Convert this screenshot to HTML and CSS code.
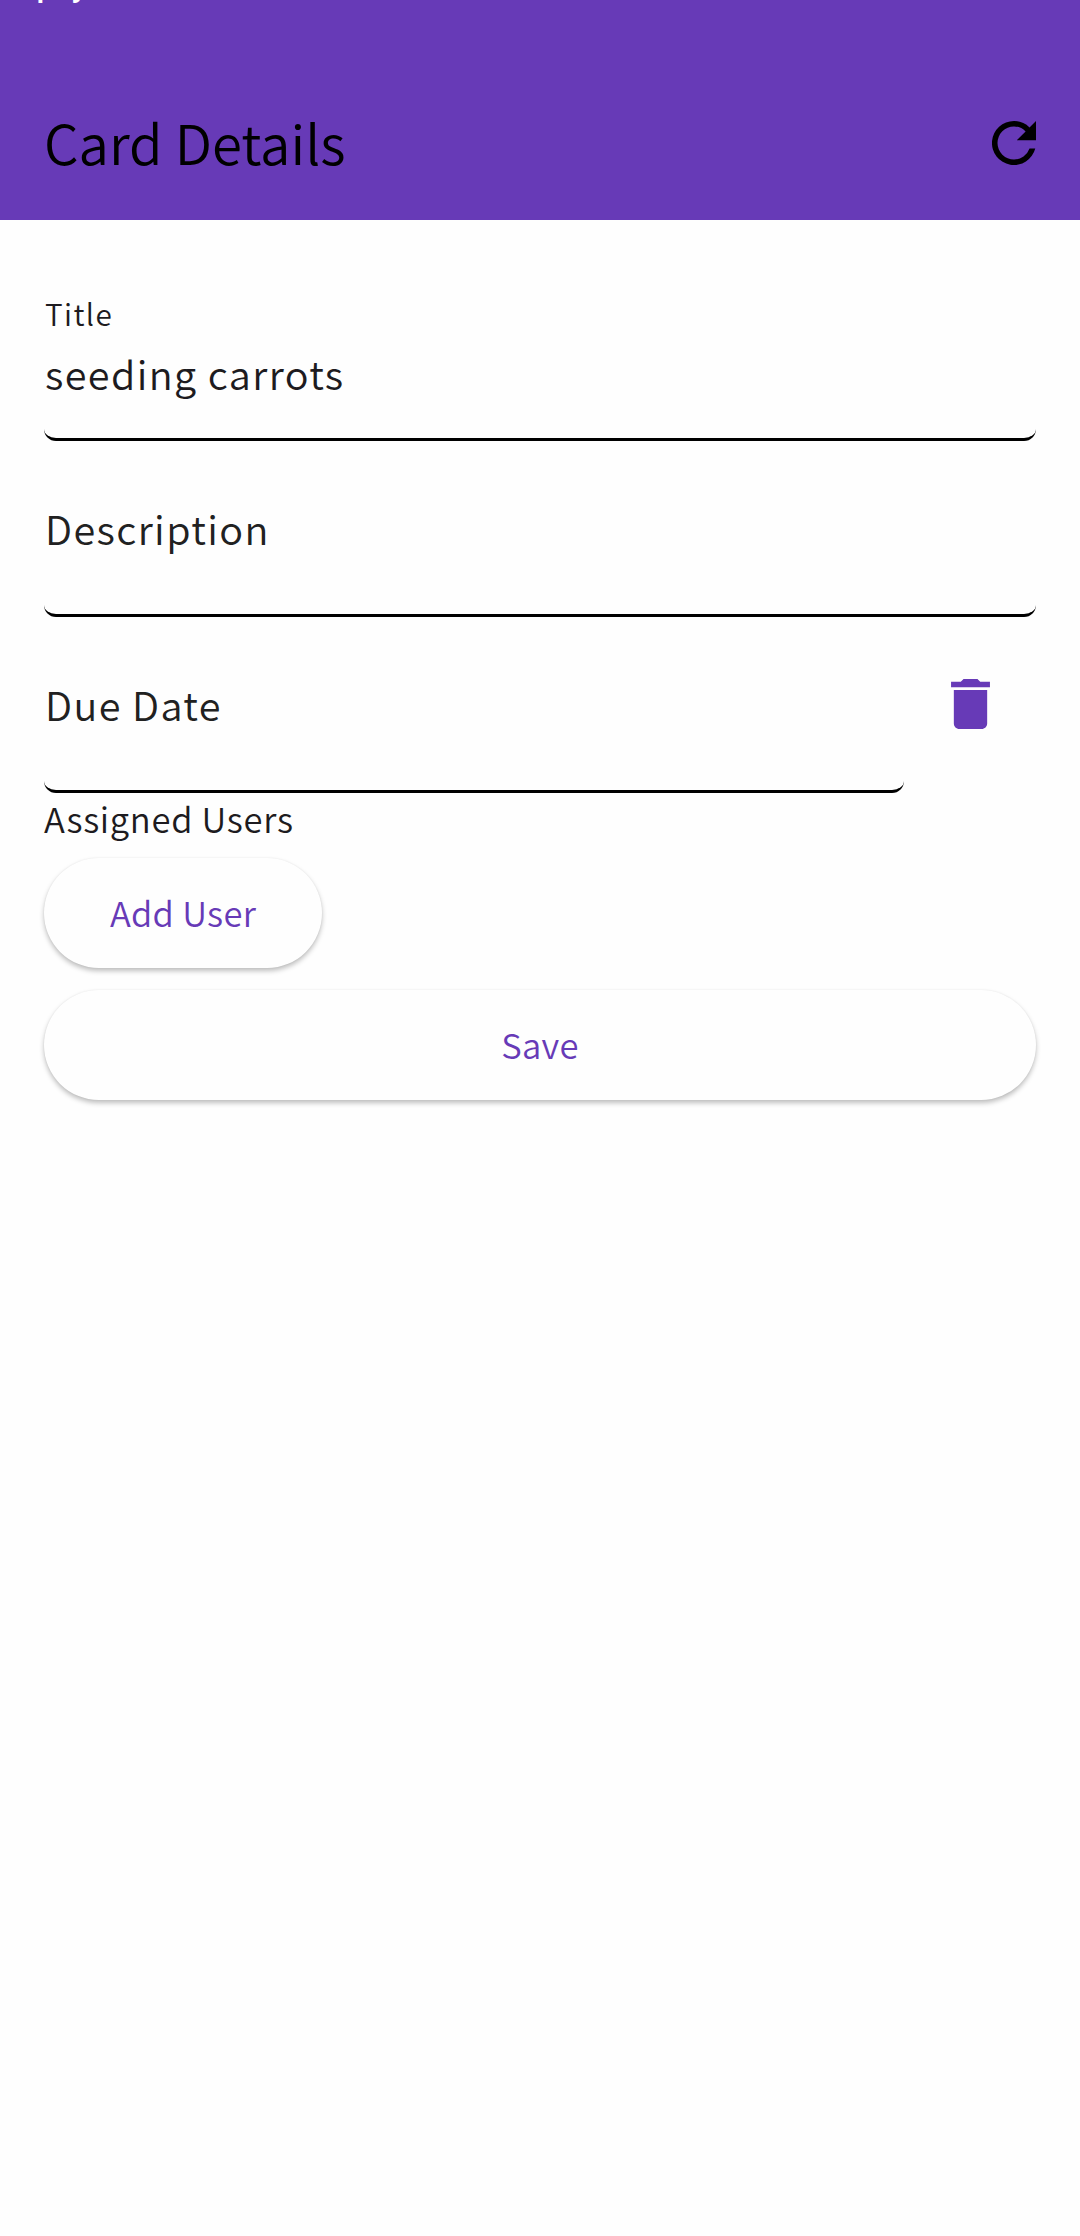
FILE: index.html
```html
<!DOCTYPE html>
<html lang="en">
<head>
<meta charset="utf-8">
<title>Card Details</title>
<link rel="stylesheet" href="styles.css">
</head>
<body>
<header class="app-bar">
  <span class="carrier">spay</span>
  <h1 class="app-title">Card Details</h1>
  <svg class="refresh" viewBox="4 4 16 16" aria-label="Refresh"><path d="M17.65 6.35A7.958 7.958 0 0 0 12 4a8 8 0 1 0 7.73 10h-2.08A5.99 5.99 0 0 1 12 18a6 6 0 1 1 0-12c1.66 0 3.14.69 4.22 1.78L13 11h7V4z"/></svg>
</header>
<main class="form">
  <div class="field">
    <label class="label-small">Title</label>
    <div class="value">seeding carrots</div>
  </div>
  <div class="field">
    <div class="label">Description</div>
  </div>
  <div class="date-row">
    <div class="field">
      <div class="label">Due Date</div>
    </div>
    <svg class="trash" viewBox="5 3 14 18" aria-label="Delete"><path d="M6 19c0 1.1.9 2 2 2h8c1.1 0 2-.9 2-2V7H6zM19 4h-3.5l-1-1h-5l-1 1H5v2h14z"/></svg>
  </div>
  <div class="section">Assigned Users</div>
  <button class="button add">Add User</button>
  <button class="button save">Save</button>
</main>
</body>
</html>
```
FILE: styles.css
```css
* { box-sizing: border-box; }
body {
  margin: 0;
  min-height: 2236px;
  background: #fefefe;
  color: #1d1b20;
  font-family: "Noto Sans CJK SC DemiLight", "Noto Sans CJK SC", sans-serif;
  font-weight: 350;
}
.app-bar {
  position: relative;
  display: flex;
  align-items: center;
  justify-content: space-between;
  height: 220px;
  padding: 66px 44px 0;
  overflow: hidden;
  background: #673ab7;
  color: #000;
}
.carrier {
  position: absolute;
  left: 20px;
  top: -33px;
  color: #fff;
  font: 500 32px/38px Roboto, sans-serif;
}
.app-title {
  margin: 0 0 2px;
  font-size: 54.5px;
  font-weight: 350;
  line-height: 76px;
}
.refresh { width: 44px; height: 44px; }
.form {
  display: flex;
  flex-direction: column;
  padding: 66px 44px 0;
}
.field {
  flex: 1 0 auto;
  height: 155px;
  margin-bottom: 21px;
  border-bottom: 3px solid #000;
  border-radius: 0 0 12px 12px;
  letter-spacing: 1.4px;
}
.label-small {
  display: block;
  padding: 9px 0 0 1px;
  font-size: 29.7px;
  line-height: 38px;
}
.value { padding: 10px 0 0 1px; font-size: 39.6px; line-height: 60px; }
.label { padding: 36px 0 0 1px; font-size: 39.6px; line-height: 60px; color: #212121; }
.date-row { display: flex; gap: 47px; }
.date-row .field { margin-bottom: 0; }
.trash { width: 39px; height: 50px; margin: 41px 46px 0 0; fill: #673ab7; }
.section { font-size: 34.6px; line-height: 50px; letter-spacing: .7px; }
.button {
  height: 110px;
  padding: 0 0 2px;
  border: 0;
  border-radius: 55px;
  background: #fefefe;
  box-shadow: 0 3px 5px rgba(0,0,0,.25), 0 0 2px rgba(0,0,0,.06);
  color: #673ab7;
  font: inherit;
  font-size: 34.6px;
  line-height: 50px;
  letter-spacing: .3px;
}
.add { width: 278px; margin: 15px 0 22px; }
```
